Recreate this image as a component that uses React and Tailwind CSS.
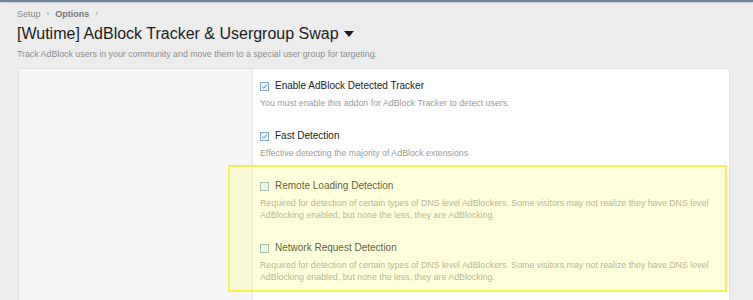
import React from "react";

const options = [
  {
    label: "Enable AdBlock Detected Tracker",
    hint: "You must enable this addon for AdBlock Tracker to detect users.",
    checked: true,
  },
  {
    label: "Fast Detection",
    hint: "Effective detecting the majority of AdBlock extensions",
    checked: true,
  },
  {
    label: "Remote Loading Detection",
    hint: "Required for detection of certain types of DNS level AdBlockers. Some visitors may not realize they have DNS level AdBlocking enabled, but none the less, they are AdBlocking.",
    checked: false,
  },
  {
    label: "Network Request Detection",
    hint: "Required for detection of certain types of DNS level AdBlockers. Some visitors may not realize they have DNS level AdBlocking enabled, but none the less, they are AdBlocking.",
    checked: false,
  },
];

const Checkbox = ({ checked }) => (
  <span className="w-[9px] h-[9px] border border-[#7fa9c7] bg-[#eef4f9] flex items-center justify-center shrink-0">
    {checked && (
      <svg width="7" height="7" viewBox="0 0 8 8">
        <path d="M1.3 4.2 L3.2 6 L6.8 1.8" fill="none" stroke="#3d85bd" strokeWidth="1.1" />
      </svg>
    )}
  </span>
);

const OptionRow = ({ label, hint, checked }) => (
  <div className="py-[10px]">
    <label className="flex items-center gap-[6px] text-[10px] leading-[14px] text-[#222]">
      <Checkbox checked={checked} />
      {label}
    </label>
    <p className="mt-[4px] text-[8.8px] leading-[12px] text-[#9a9a9a] pr-[16px]">{hint}</p>
  </div>
);

export default function App() {
  return (
    <div
      className="w-[753px] h-[300px] overflow-hidden bg-[#ececec] relative"
      style={{ fontFamily: '"Liberation Sans", Arial, sans-serif' }}
    >
      <div className="h-[2px] bg-[#6a86a0] shadow-[0_1px_2px_rgba(0,0,0,0.15)]" />
      <div className="px-[17px]">
        <div className="mt-[6px] flex items-center gap-[6px] text-[9px] leading-[12px] text-[#8a8a8a]">
          <span>Setup</span>
          <span className="text-[8px]">›</span>
          <span className="font-bold text-[#777]">Options</span>
          <span className="text-[8px]">›</span>
        </div>
        <h1 className="mt-[3px] text-[16px] leading-[22px] text-[#1c1c1c] flex items-center gap-[5px]">
          [Wutime] AdBlock Tracker &amp; Usergroup Swap
          <svg width="10" height="7" viewBox="0 0 10 7">
            <path d="M0 0 H10 L5 6 Z" fill="#1c1c1c" />
          </svg>
        </h1>
        <p className="mt-[3px] text-[8.8px] leading-[12px] text-[#8e8e8e]">
          Track AdBlock users in your community and move them to a special user group for targeting.
        </p>
      </div>

      <div className="relative ml-[18px] mt-[8px] w-[712px] flex border border-[#e0e0e0] rounded-[3px] bg-white">
        <div className="w-[234px] bg-[#f5f5f5] border-r border-[#e4e4e4] shrink-0" />
        <div className="flex-1 pl-[7px] pb-[30px]">
          {options.map((o) => (
            <OptionRow key={o.label} {...o} />
          ))}
        </div>
        <div className="absolute left-[209px] top-[96px] w-[499px] h-[127px] border-2 border-[#f6f153] bg-[rgba(255,255,130,0.28)] pointer-events-none" />
      </div>
    </div>
  );
}
